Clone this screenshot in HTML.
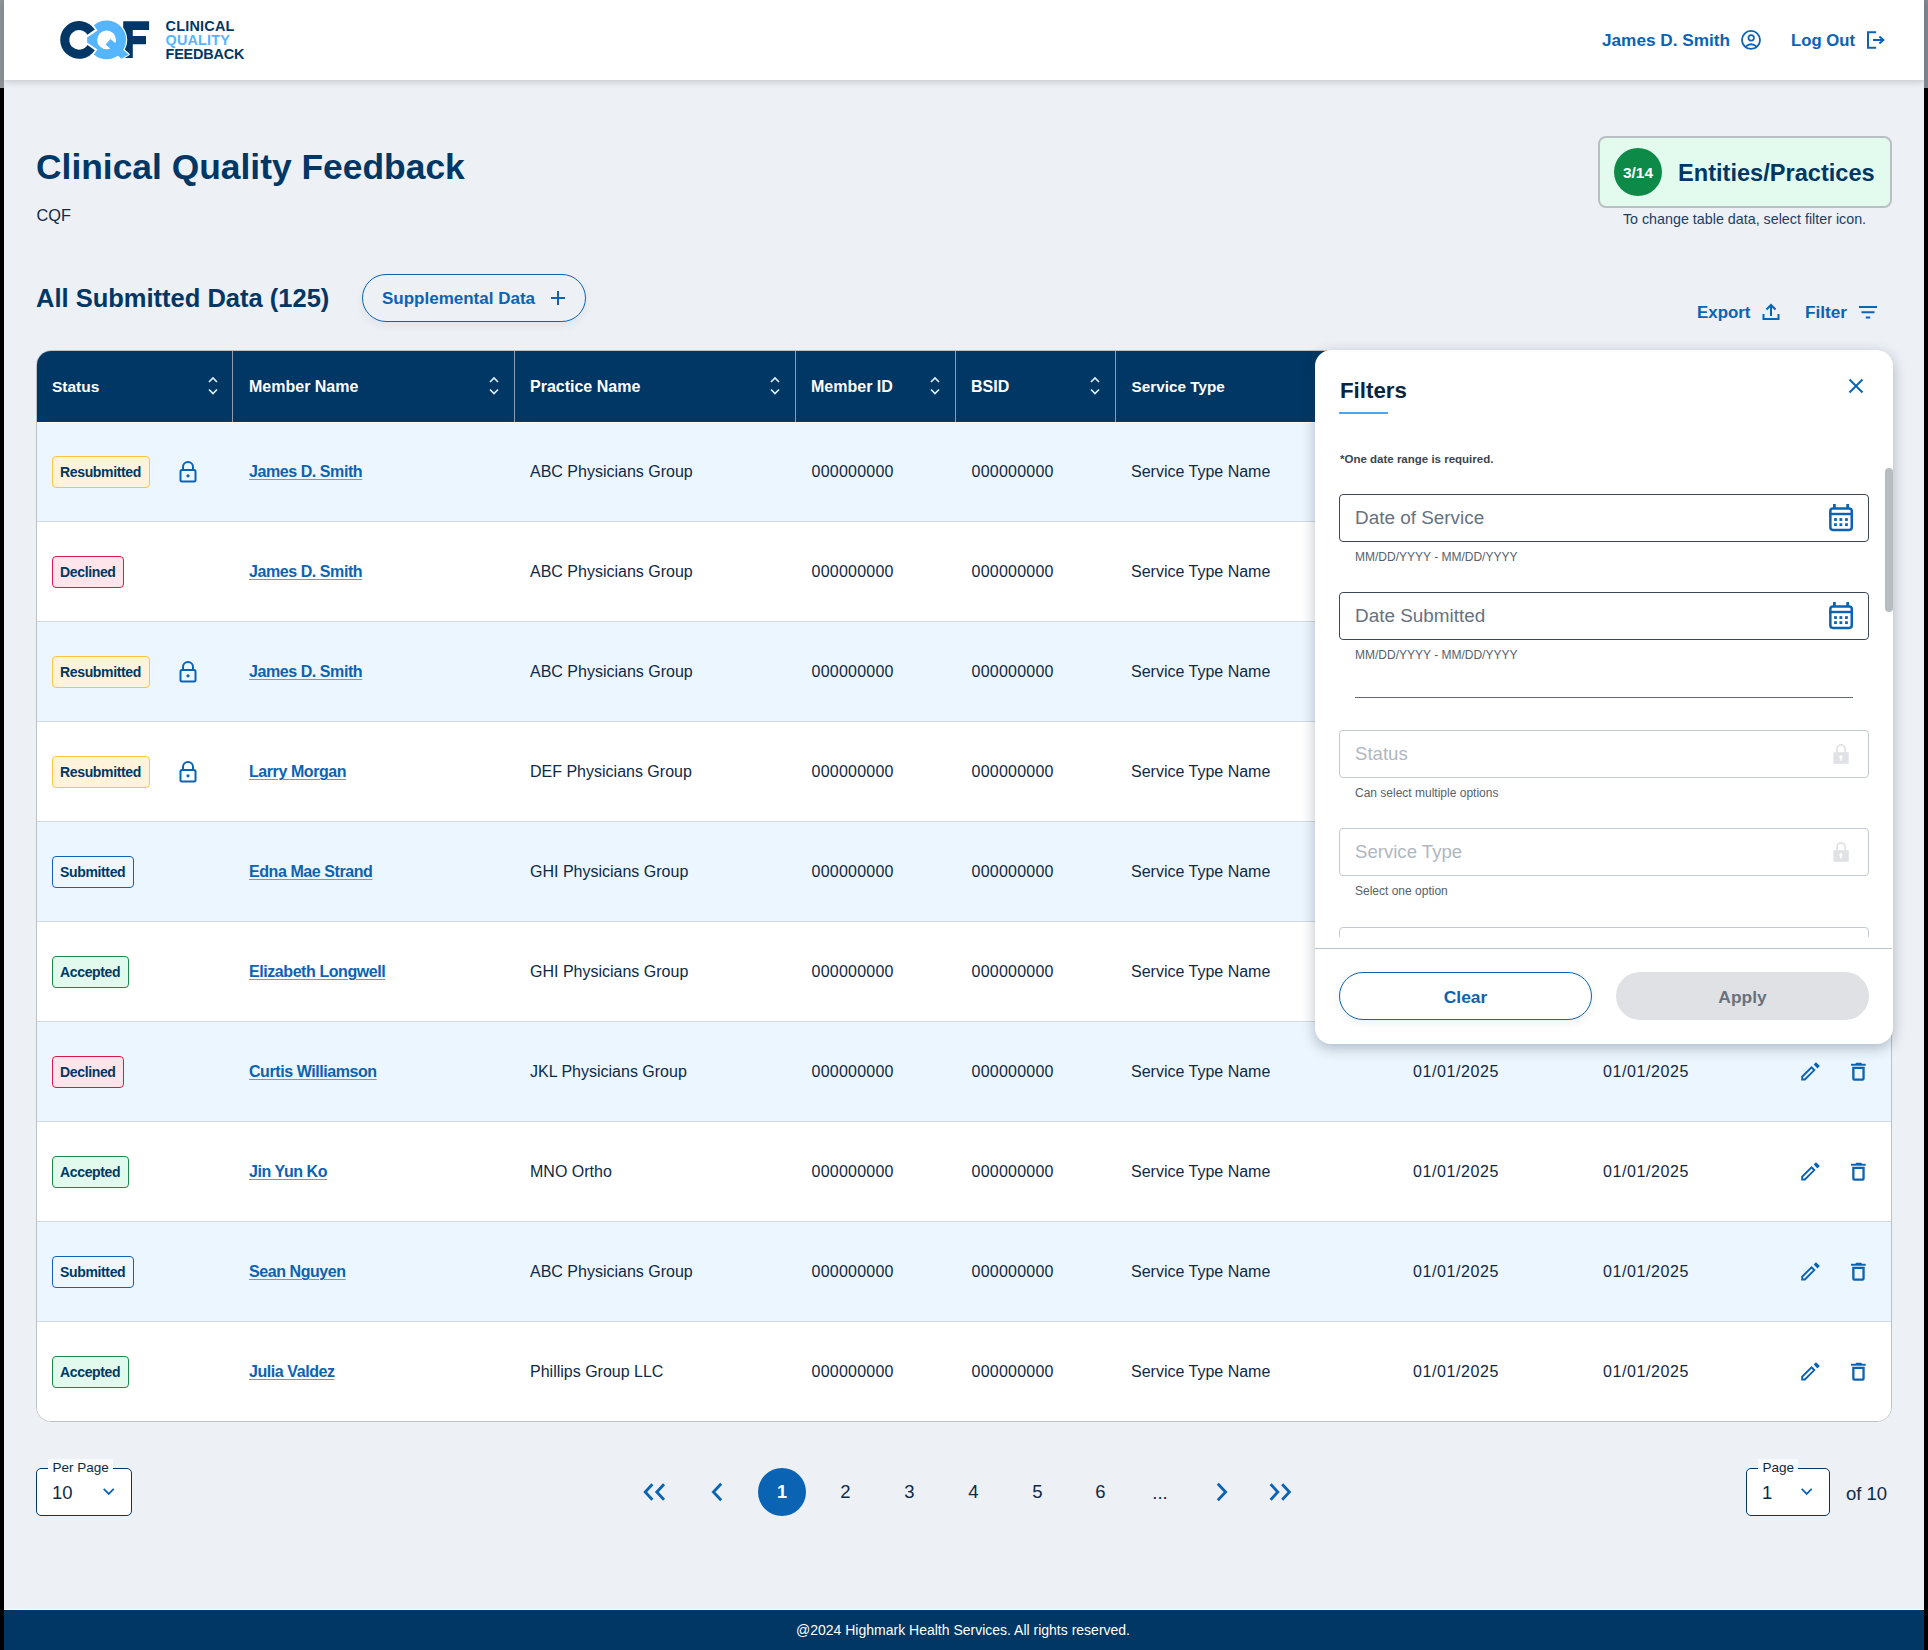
<!DOCTYPE html>
<html><head><meta charset="utf-8"><style>
*{box-sizing:border-box;margin:0;padding:0}
html,body{width:1928px;height:1650px;overflow:hidden}
body{background:#EDF0F5;font-family:"Liberation Sans",sans-serif;position:relative}
.t{position:absolute;white-space:nowrap}
.a{position:absolute}
svg{position:absolute;overflow:visible}
</style></head><body>
<div class="a" style="left:0;top:0;width:4px;height:88px;background:#8E9396"></div><div class="a" style="left:0;top:88px;width:4px;height:1562px;background:#000"></div><div class="a" style="left:1924px;top:0;width:4px;height:88px;background:#7E8790"></div><div class="a" style="left:1924px;top:88px;width:4px;height:1562px;background:#000"></div><div class="a" style="left:4px;top:0;width:1920px;height:80px;background:#fff;box-shadow:0 2px 6px rgba(50,62,75,.22)"></div><svg style="left:0;top:0" width="260" height="80" viewBox="0 0 260 80">
<path d="M94.85 29.45 A18.9 18.9 0 1 0 94.85 50.35 L87.45 45.0 A9.78 9.78 0 1 1 87.45 34.8 Z" fill="#003764"/>
<path d="M123.2 21.2 H149.1 V30 H132.8 V36 H146 V44.3 H132.8 V58 H123.2 Z" fill="#003764"/>
<g fill="#fff" stroke="#fff" stroke-width="2.2" stroke-linejoin="round">
<path d="M93.9 25.3 A19.4 19.4 0 1 1 93.9 54.4 L97.5 49.45 L87.1 42.5 L87.1 37.45 L97.5 30.4 Z"/>
<path d="M105.6 44.6 L110.5 38.9 L128.65 54.4 L121.4 58.8 Z"/>
</g>
<path d="M93.9 25.3 A19.4 19.4 0 1 1 93.9 54.4 L97.5 49.45 L87.1 42.5 L87.1 37.45 L97.5 30.4 Z" fill="#55B5FF"/>
<circle cx="106.6" cy="39.9" r="9.4" fill="#fff"/>
<path d="M105.6 44.6 L110.5 38.9 L128.65 54.4 L121.4 58.8 Z" fill="#55B5FF"/>
</svg><div class="t" style="left:165.5px;top:17.87px;font-size:14.4px;line-height:16.55px;color:#003764;font-weight:700;letter-spacing:0.25px">CLINICAL</div><div class="t" style="left:165.5px;top:31.87px;font-size:14.4px;line-height:16.55px;color:#55B5FF;font-weight:700;letter-spacing:0.2px">QUALITY</div><div class="t" style="left:165.5px;top:45.87px;font-size:14.4px;line-height:16.55px;color:#003764;font-weight:700;letter-spacing:-0.15px">FEEDBACK</div><div class="t" style="left:1602px;top:30.93px;font-size:17.2px;line-height:19.76px;color:#0B63B3;font-weight:700;">James D. Smith</div><svg style="left:1739px;top:28px" width="24" height="24" viewBox="0 0 24 24">
<circle cx="12" cy="11.9" r="9" fill="none" stroke="#0B63B3" stroke-width="1.8"/>
<circle cx="12.2" cy="9.8" r="2.75" fill="none" stroke="#0B63B3" stroke-width="1.7"/>
<path d="M6.3 18.8 Q12.1 13.6 17.9 18.8" fill="none" stroke="#0B63B3" stroke-width="1.8"/>
</svg><div class="t" style="left:1791px;top:31.39px;font-size:16.7px;line-height:19.19px;color:#0B63B3;font-weight:700;">Log Out</div><svg style="left:1864px;top:28px" width="24" height="24" viewBox="0 0 24 24">
<path d="M12.2 4.2 H4 V19.8 H12.2" fill="none" stroke="#0B63B3" stroke-width="2"/>
<path d="M9 12 H19.8 M15.4 8.4 L19.4 12 L15.4 15.6" fill="none" stroke="#0B63B3" stroke-width="2"/>
</svg><div class="t" style="left:36px;top:147.46px;font-size:35.4px;line-height:40.67px;color:#003764;font-weight:700;">Clinical Quality Feedback</div><div class="t" style="left:36.5px;top:206.45px;font-size:16.3px;line-height:18.73px;color:#0E2A47;font-weight:400;">CQF</div><div class="a" style="left:1598px;top:136px;width:294px;height:72px;border:2px solid #BABFC4;border-radius:8px;background:#E3FBEE"></div><div class="a" style="left:1614px;top:148px;width:48px;height:48px;border-radius:50%;background:#0E8A48"></div><div class="t" style="left:1338px;width:600px;text-align:center;top:164.26px;font-size:15.4px;line-height:17.69px;color:#fff;font-weight:700;">3/14</div><div class="t" style="left:1678px;top:159.64px;font-size:23.6px;line-height:27.12px;color:#003764;font-weight:700;">Entities/Practices</div><div class="t" style="left:1444.5px;width:600px;text-align:center;top:211.06px;font-size:14.3px;line-height:16.43px;color:#1B3E63;font-weight:400;">To change table data, select filter icon.</div><div class="t" style="left:36px;top:283.92px;font-size:25.5px;line-height:29.30px;color:#003764;font-weight:700;">All Submitted Data (125)</div><div class="a" style="left:362px;top:274px;width:224px;height:48px;border:1.6px solid #0B63B3;border-radius:24px;box-shadow:0 4px 10px rgba(40,60,90,.06)"></div><div class="t" style="left:382px;top:289.22px;font-size:17px;line-height:19.53px;color:#0B63B3;font-weight:700;">Supplemental Data</div><svg style="left:550px;top:290px" width="16" height="16" viewBox="0 0 16 16">
<path d="M8 1 V15 M1 8 H15" stroke="#0B63B3" stroke-width="2"/></svg><div class="t" style="left:1697px;top:302.71px;font-size:16.9px;line-height:19.42px;color:#0B63B3;font-weight:700;">Export</div><svg style="left:1762px;top:303px" width="18" height="18" viewBox="0 0 18 18">
<path d="M9 13 V2 M4.5 6.5 L9 2 L13.5 6.5 M1.5 11 V16 H16.5 V11" fill="none" stroke="#0B63B3" stroke-width="2"/></svg><div class="t" style="left:1805px;top:303.43px;font-size:17.2px;line-height:19.76px;color:#0B63B3;font-weight:700;">Filter</div><svg style="left:1858px;top:304px" width="20" height="16" viewBox="0 0 20 16">
<path d="M1 3 H19 M3.5 8.3 H16.5 M7.8 13.5 H12.2" stroke="#0B63B3" stroke-width="2"/></svg><div class="a" style="left:36px;top:350px;width:1856px;height:1072px;border:1px solid #BAC1C7;border-radius:15px;background:#fff;overflow:hidden"><div class="a" style="left:0px;top:0px;width:1854px;height:71px;background:#003764"></div><div class="a" style="left:0px;top:71px;width:1854px;height:1px;background:#fff"></div><div class="a" style="left:195px;top:0px;width:1px;height:71px;background:#8A9FB5"></div><div class="a" style="left:477px;top:0px;width:1px;height:71px;background:#8A9FB5"></div><div class="a" style="left:758px;top:0px;width:1px;height:71px;background:#8A9FB5"></div><div class="a" style="left:918px;top:0px;width:1px;height:71px;background:#8A9FB5"></div><div class="a" style="left:1078px;top:0px;width:1px;height:71px;background:#8A9FB5"></div><div class="a" style="left:0px;top:72px;width:1854px;height:99px;background:#ECF6FE"></div><div class="a" style="left:0px;top:170px;width:1854px;height:1px;background:#D3D9E0"></div><div class="a" style="left:0px;top:171px;width:1854px;height:99px;background:#FFFFFF"></div><div class="a" style="left:0px;top:270px;width:1854px;height:1px;background:#D3D9E0"></div><div class="a" style="left:0px;top:271px;width:1854px;height:99px;background:#ECF6FE"></div><div class="a" style="left:0px;top:370px;width:1854px;height:1px;background:#D3D9E0"></div><div class="a" style="left:0px;top:371px;width:1854px;height:99px;background:#FFFFFF"></div><div class="a" style="left:0px;top:470px;width:1854px;height:1px;background:#D3D9E0"></div><div class="a" style="left:0px;top:471px;width:1854px;height:99px;background:#ECF6FE"></div><div class="a" style="left:0px;top:570px;width:1854px;height:1px;background:#D3D9E0"></div><div class="a" style="left:0px;top:571px;width:1854px;height:99px;background:#FFFFFF"></div><div class="a" style="left:0px;top:670px;width:1854px;height:1px;background:#D3D9E0"></div><div class="a" style="left:0px;top:671px;width:1854px;height:99px;background:#ECF6FE"></div><div class="a" style="left:0px;top:770px;width:1854px;height:1px;background:#D3D9E0"></div><div class="a" style="left:0px;top:771px;width:1854px;height:99px;background:#FFFFFF"></div><div class="a" style="left:0px;top:870px;width:1854px;height:1px;background:#D3D9E0"></div><div class="a" style="left:0px;top:871px;width:1854px;height:99px;background:#ECF6FE"></div><div class="a" style="left:0px;top:970px;width:1854px;height:1px;background:#D3D9E0"></div><div class="a" style="left:0px;top:971px;width:1854px;height:99px;background:#FFFFFF"></div></div><div class="t" style="left:52px;top:377.97px;font-size:15.5px;line-height:17.81px;color:#fff;font-weight:700;">Status</div><div class="t" style="left:249px;top:377.52px;font-size:16px;line-height:18.38px;color:#fff;font-weight:700;">Member Name</div><div class="t" style="left:530px;top:377.52px;font-size:16px;line-height:18.38px;color:#fff;font-weight:700;">Practice Name</div><div class="t" style="left:811px;top:377.52px;font-size:16px;line-height:18.38px;color:#fff;font-weight:700;">Member ID</div><div class="t" style="left:971px;top:377.52px;font-size:16px;line-height:18.38px;color:#fff;font-weight:700;">BSID</div><div class="t" style="left:1131.5px;top:378.15px;font-size:15.3px;line-height:17.58px;color:#fff;font-weight:700;">Service Type</div><svg style="left:207px;top:376px" width="12" height="20" viewBox="0 0 12 20">
<path d="M2 6 L6 2 L10 6 M2 13.5 L6 17.5 L10 13.5" fill="none" stroke="#DCEEFF" stroke-width="1.7"/></svg><svg style="left:488px;top:376px" width="12" height="20" viewBox="0 0 12 20">
<path d="M2 6 L6 2 L10 6 M2 13.5 L6 17.5 L10 13.5" fill="none" stroke="#DCEEFF" stroke-width="1.7"/></svg><svg style="left:769px;top:376px" width="12" height="20" viewBox="0 0 12 20">
<path d="M2 6 L6 2 L10 6 M2 13.5 L6 17.5 L10 13.5" fill="none" stroke="#DCEEFF" stroke-width="1.7"/></svg><svg style="left:929px;top:376px" width="12" height="20" viewBox="0 0 12 20">
<path d="M2 6 L6 2 L10 6 M2 13.5 L6 17.5 L10 13.5" fill="none" stroke="#DCEEFF" stroke-width="1.7"/></svg><svg style="left:1089px;top:376px" width="12" height="20" viewBox="0 0 12 20">
<path d="M2 6 L6 2 L10 6 M2 13.5 L6 17.5 L10 13.5" fill="none" stroke="#DCEEFF" stroke-width="1.7"/></svg><div class="a" style="left:52px;top:456.0px;width:98px;height:32px;background:#FFF3DB;border:1.6px solid #FFC53D;border-radius:4px"></div><div class="t" style="left:60px;top:463.73px;font-size:14px;line-height:16.09px;color:#003764;font-weight:700;letter-spacing:-0.35px">Resubmitted</div><svg style="left:178px;top:459.5px" width="20" height="24" viewBox="0 0 20 24">
<path d="M5 10 V7 A5 5 0 0 1 15 7 V10" fill="none" stroke="#0B63B3" stroke-width="2"/>
<rect x="2.5" y="10" width="15" height="11.5" rx="1.5" fill="none" stroke="#0B63B3" stroke-width="2"/>
<circle cx="10" cy="15.8" r="1.6" fill="#0B63B3"/></svg><div class="t" style="left:249px;top:463.22px;font-size:16px;line-height:18.38px;color:#0B63B3;font-weight:700;letter-spacing:-0.43px;text-decoration:underline;text-decoration-color:#5E9DD6;text-decoration-thickness:1.3px;text-underline-offset:1.6px">James D. Smith</div><div class="t" style="left:530px;top:462.52px;font-size:16px;line-height:18.38px;color:#0E2A47;font-weight:400;">ABC Physicians Group</div><div class="t" style="left:811.5px;top:462.52px;font-size:16px;line-height:18.38px;color:#0E2A47;font-weight:400;letter-spacing:0.23px">000000000</div><div class="t" style="left:971.5px;top:462.52px;font-size:16px;line-height:18.38px;color:#0E2A47;font-weight:400;letter-spacing:0.23px">000000000</div><div class="t" style="left:1131px;top:462.52px;font-size:16px;line-height:18.38px;color:#0E2A47;font-weight:400;">Service Type Name</div><div class="t" style="left:1413px;top:462.52px;font-size:16px;line-height:18.38px;color:#0E2A47;font-weight:400;letter-spacing:0.6px">01/01/2025</div><div class="t" style="left:1603px;top:462.52px;font-size:16px;line-height:18.38px;color:#0E2A47;font-weight:400;letter-spacing:0.6px">01/01/2025</div><svg style="left:1799px;top:460px" width="24" height="24" viewBox="0 0 24 24"><g transform="translate(0,0)">
<path d="M3.15 16.75 V19.45 H5.9 L15.3 10.05 L12.55 7.3 Z" fill="none" stroke="#0B63B3" stroke-width="1.9" stroke-linejoin="miter"/>
<path d="M16.95 2.35 L20.9 5.95 L18.4 8.45 L14.7 4.6 Z" fill="#0B63B3"/></g></svg><svg style="left:1847px;top:460px" width="24" height="24" viewBox="0 0 24 24"><g transform="translate(0,0.2)">
<rect x="4" y="3.6" width="14.7" height="1.9" fill="#0B63B3"/><rect x="8.6" y="2.6" width="6.2" height="1.6" rx="0.8" fill="#0B63B3"/>
<path d="M6.35 6.5 V18.3 Q6.35 19.45 7.5 19.45 H15.4 Q16.55 19.45 16.55 18.3 V6.5 M5.2 7.65 H17.7" fill="none" stroke="#0B63B3" stroke-width="2.3"/></g></svg><div class="a" style="left:52px;top:556.0px;width:72px;height:32px;background:#FDE5EB;border:1.6px solid #D7194A;border-radius:4px"></div><div class="t" style="left:60px;top:563.73px;font-size:14px;line-height:16.09px;color:#003764;font-weight:700;letter-spacing:-0.35px">Declined</div><div class="t" style="left:249px;top:563.22px;font-size:16px;line-height:18.38px;color:#0B63B3;font-weight:700;letter-spacing:-0.43px;text-decoration:underline;text-decoration-color:#5E9DD6;text-decoration-thickness:1.3px;text-underline-offset:1.6px">James D. Smith</div><div class="t" style="left:530px;top:562.52px;font-size:16px;line-height:18.38px;color:#0E2A47;font-weight:400;">ABC Physicians Group</div><div class="t" style="left:811.5px;top:562.52px;font-size:16px;line-height:18.38px;color:#0E2A47;font-weight:400;letter-spacing:0.23px">000000000</div><div class="t" style="left:971.5px;top:562.52px;font-size:16px;line-height:18.38px;color:#0E2A47;font-weight:400;letter-spacing:0.23px">000000000</div><div class="t" style="left:1131px;top:562.52px;font-size:16px;line-height:18.38px;color:#0E2A47;font-weight:400;">Service Type Name</div><div class="t" style="left:1413px;top:562.52px;font-size:16px;line-height:18.38px;color:#0E2A47;font-weight:400;letter-spacing:0.6px">01/01/2025</div><div class="t" style="left:1603px;top:562.52px;font-size:16px;line-height:18.38px;color:#0E2A47;font-weight:400;letter-spacing:0.6px">01/01/2025</div><svg style="left:1799px;top:560px" width="24" height="24" viewBox="0 0 24 24"><g transform="translate(0,0)">
<path d="M3.15 16.75 V19.45 H5.9 L15.3 10.05 L12.55 7.3 Z" fill="none" stroke="#0B63B3" stroke-width="1.9" stroke-linejoin="miter"/>
<path d="M16.95 2.35 L20.9 5.95 L18.4 8.45 L14.7 4.6 Z" fill="#0B63B3"/></g></svg><svg style="left:1847px;top:560px" width="24" height="24" viewBox="0 0 24 24"><g transform="translate(0,0.2)">
<rect x="4" y="3.6" width="14.7" height="1.9" fill="#0B63B3"/><rect x="8.6" y="2.6" width="6.2" height="1.6" rx="0.8" fill="#0B63B3"/>
<path d="M6.35 6.5 V18.3 Q6.35 19.45 7.5 19.45 H15.4 Q16.55 19.45 16.55 18.3 V6.5 M5.2 7.65 H17.7" fill="none" stroke="#0B63B3" stroke-width="2.3"/></g></svg><div class="a" style="left:52px;top:656.0px;width:98px;height:32px;background:#FFF3DB;border:1.6px solid #FFC53D;border-radius:4px"></div><div class="t" style="left:60px;top:663.73px;font-size:14px;line-height:16.09px;color:#003764;font-weight:700;letter-spacing:-0.35px">Resubmitted</div><svg style="left:178px;top:659.5px" width="20" height="24" viewBox="0 0 20 24">
<path d="M5 10 V7 A5 5 0 0 1 15 7 V10" fill="none" stroke="#0B63B3" stroke-width="2"/>
<rect x="2.5" y="10" width="15" height="11.5" rx="1.5" fill="none" stroke="#0B63B3" stroke-width="2"/>
<circle cx="10" cy="15.8" r="1.6" fill="#0B63B3"/></svg><div class="t" style="left:249px;top:663.22px;font-size:16px;line-height:18.38px;color:#0B63B3;font-weight:700;letter-spacing:-0.43px;text-decoration:underline;text-decoration-color:#5E9DD6;text-decoration-thickness:1.3px;text-underline-offset:1.6px">James D. Smith</div><div class="t" style="left:530px;top:662.52px;font-size:16px;line-height:18.38px;color:#0E2A47;font-weight:400;">ABC Physicians Group</div><div class="t" style="left:811.5px;top:662.52px;font-size:16px;line-height:18.38px;color:#0E2A47;font-weight:400;letter-spacing:0.23px">000000000</div><div class="t" style="left:971.5px;top:662.52px;font-size:16px;line-height:18.38px;color:#0E2A47;font-weight:400;letter-spacing:0.23px">000000000</div><div class="t" style="left:1131px;top:662.52px;font-size:16px;line-height:18.38px;color:#0E2A47;font-weight:400;">Service Type Name</div><div class="t" style="left:1413px;top:662.52px;font-size:16px;line-height:18.38px;color:#0E2A47;font-weight:400;letter-spacing:0.6px">01/01/2025</div><div class="t" style="left:1603px;top:662.52px;font-size:16px;line-height:18.38px;color:#0E2A47;font-weight:400;letter-spacing:0.6px">01/01/2025</div><svg style="left:1799px;top:660px" width="24" height="24" viewBox="0 0 24 24"><g transform="translate(0,0)">
<path d="M3.15 16.75 V19.45 H5.9 L15.3 10.05 L12.55 7.3 Z" fill="none" stroke="#0B63B3" stroke-width="1.9" stroke-linejoin="miter"/>
<path d="M16.95 2.35 L20.9 5.95 L18.4 8.45 L14.7 4.6 Z" fill="#0B63B3"/></g></svg><svg style="left:1847px;top:660px" width="24" height="24" viewBox="0 0 24 24"><g transform="translate(0,0.2)">
<rect x="4" y="3.6" width="14.7" height="1.9" fill="#0B63B3"/><rect x="8.6" y="2.6" width="6.2" height="1.6" rx="0.8" fill="#0B63B3"/>
<path d="M6.35 6.5 V18.3 Q6.35 19.45 7.5 19.45 H15.4 Q16.55 19.45 16.55 18.3 V6.5 M5.2 7.65 H17.7" fill="none" stroke="#0B63B3" stroke-width="2.3"/></g></svg><div class="a" style="left:52px;top:756.0px;width:98px;height:32px;background:#FFF3DB;border:1.6px solid #FFC53D;border-radius:4px"></div><div class="t" style="left:60px;top:763.73px;font-size:14px;line-height:16.09px;color:#003764;font-weight:700;letter-spacing:-0.35px">Resubmitted</div><svg style="left:178px;top:759.5px" width="20" height="24" viewBox="0 0 20 24">
<path d="M5 10 V7 A5 5 0 0 1 15 7 V10" fill="none" stroke="#0B63B3" stroke-width="2"/>
<rect x="2.5" y="10" width="15" height="11.5" rx="1.5" fill="none" stroke="#0B63B3" stroke-width="2"/>
<circle cx="10" cy="15.8" r="1.6" fill="#0B63B3"/></svg><div class="t" style="left:249px;top:763.22px;font-size:16px;line-height:18.38px;color:#0B63B3;font-weight:700;letter-spacing:-0.43px;text-decoration:underline;text-decoration-color:#5E9DD6;text-decoration-thickness:1.3px;text-underline-offset:1.6px">Larry Morgan</div><div class="t" style="left:530px;top:762.52px;font-size:16px;line-height:18.38px;color:#0E2A47;font-weight:400;">DEF Physicians Group</div><div class="t" style="left:811.5px;top:762.52px;font-size:16px;line-height:18.38px;color:#0E2A47;font-weight:400;letter-spacing:0.23px">000000000</div><div class="t" style="left:971.5px;top:762.52px;font-size:16px;line-height:18.38px;color:#0E2A47;font-weight:400;letter-spacing:0.23px">000000000</div><div class="t" style="left:1131px;top:762.52px;font-size:16px;line-height:18.38px;color:#0E2A47;font-weight:400;">Service Type Name</div><div class="t" style="left:1413px;top:762.52px;font-size:16px;line-height:18.38px;color:#0E2A47;font-weight:400;letter-spacing:0.6px">01/01/2025</div><div class="t" style="left:1603px;top:762.52px;font-size:16px;line-height:18.38px;color:#0E2A47;font-weight:400;letter-spacing:0.6px">01/01/2025</div><svg style="left:1799px;top:760px" width="24" height="24" viewBox="0 0 24 24"><g transform="translate(0,0)">
<path d="M3.15 16.75 V19.45 H5.9 L15.3 10.05 L12.55 7.3 Z" fill="none" stroke="#0B63B3" stroke-width="1.9" stroke-linejoin="miter"/>
<path d="M16.95 2.35 L20.9 5.95 L18.4 8.45 L14.7 4.6 Z" fill="#0B63B3"/></g></svg><svg style="left:1847px;top:760px" width="24" height="24" viewBox="0 0 24 24"><g transform="translate(0,0.2)">
<rect x="4" y="3.6" width="14.7" height="1.9" fill="#0B63B3"/><rect x="8.6" y="2.6" width="6.2" height="1.6" rx="0.8" fill="#0B63B3"/>
<path d="M6.35 6.5 V18.3 Q6.35 19.45 7.5 19.45 H15.4 Q16.55 19.45 16.55 18.3 V6.5 M5.2 7.65 H17.7" fill="none" stroke="#0B63B3" stroke-width="2.3"/></g></svg><div class="a" style="left:52px;top:856.0px;width:82px;height:32px;background:#EEF7FF;border:1.6px solid #1262B3;border-radius:4px"></div><div class="t" style="left:60px;top:863.73px;font-size:14px;line-height:16.09px;color:#003764;font-weight:700;letter-spacing:-0.35px">Submitted</div><div class="t" style="left:249px;top:863.22px;font-size:16px;line-height:18.38px;color:#0B63B3;font-weight:700;letter-spacing:-0.43px;text-decoration:underline;text-decoration-color:#5E9DD6;text-decoration-thickness:1.3px;text-underline-offset:1.6px">Edna Mae Strand</div><div class="t" style="left:530px;top:862.52px;font-size:16px;line-height:18.38px;color:#0E2A47;font-weight:400;">GHI Physicians Group</div><div class="t" style="left:811.5px;top:862.52px;font-size:16px;line-height:18.38px;color:#0E2A47;font-weight:400;letter-spacing:0.23px">000000000</div><div class="t" style="left:971.5px;top:862.52px;font-size:16px;line-height:18.38px;color:#0E2A47;font-weight:400;letter-spacing:0.23px">000000000</div><div class="t" style="left:1131px;top:862.52px;font-size:16px;line-height:18.38px;color:#0E2A47;font-weight:400;">Service Type Name</div><div class="t" style="left:1413px;top:862.52px;font-size:16px;line-height:18.38px;color:#0E2A47;font-weight:400;letter-spacing:0.6px">01/01/2025</div><div class="t" style="left:1603px;top:862.52px;font-size:16px;line-height:18.38px;color:#0E2A47;font-weight:400;letter-spacing:0.6px">01/01/2025</div><svg style="left:1799px;top:860px" width="24" height="24" viewBox="0 0 24 24"><g transform="translate(0,0)">
<path d="M3.15 16.75 V19.45 H5.9 L15.3 10.05 L12.55 7.3 Z" fill="none" stroke="#0B63B3" stroke-width="1.9" stroke-linejoin="miter"/>
<path d="M16.95 2.35 L20.9 5.95 L18.4 8.45 L14.7 4.6 Z" fill="#0B63B3"/></g></svg><svg style="left:1847px;top:860px" width="24" height="24" viewBox="0 0 24 24"><g transform="translate(0,0.2)">
<rect x="4" y="3.6" width="14.7" height="1.9" fill="#0B63B3"/><rect x="8.6" y="2.6" width="6.2" height="1.6" rx="0.8" fill="#0B63B3"/>
<path d="M6.35 6.5 V18.3 Q6.35 19.45 7.5 19.45 H15.4 Q16.55 19.45 16.55 18.3 V6.5 M5.2 7.65 H17.7" fill="none" stroke="#0B63B3" stroke-width="2.3"/></g></svg><div class="a" style="left:52px;top:956.0px;width:77px;height:32px;background:#E2FAED;border:1.6px solid #178A47;border-radius:4px"></div><div class="t" style="left:60px;top:963.73px;font-size:14px;line-height:16.09px;color:#003764;font-weight:700;letter-spacing:-0.35px">Accepted</div><div class="t" style="left:249px;top:963.22px;font-size:16px;line-height:18.38px;color:#0B63B3;font-weight:700;letter-spacing:-0.43px;text-decoration:underline;text-decoration-color:#5E9DD6;text-decoration-thickness:1.3px;text-underline-offset:1.6px">Elizabeth Longwell</div><div class="t" style="left:530px;top:962.52px;font-size:16px;line-height:18.38px;color:#0E2A47;font-weight:400;">GHI Physicians Group</div><div class="t" style="left:811.5px;top:962.52px;font-size:16px;line-height:18.38px;color:#0E2A47;font-weight:400;letter-spacing:0.23px">000000000</div><div class="t" style="left:971.5px;top:962.52px;font-size:16px;line-height:18.38px;color:#0E2A47;font-weight:400;letter-spacing:0.23px">000000000</div><div class="t" style="left:1131px;top:962.52px;font-size:16px;line-height:18.38px;color:#0E2A47;font-weight:400;">Service Type Name</div><div class="t" style="left:1413px;top:962.52px;font-size:16px;line-height:18.38px;color:#0E2A47;font-weight:400;letter-spacing:0.6px">01/01/2025</div><div class="t" style="left:1603px;top:962.52px;font-size:16px;line-height:18.38px;color:#0E2A47;font-weight:400;letter-spacing:0.6px">01/01/2025</div><svg style="left:1799px;top:960px" width="24" height="24" viewBox="0 0 24 24"><g transform="translate(0,0)">
<path d="M3.15 16.75 V19.45 H5.9 L15.3 10.05 L12.55 7.3 Z" fill="none" stroke="#0B63B3" stroke-width="1.9" stroke-linejoin="miter"/>
<path d="M16.95 2.35 L20.9 5.95 L18.4 8.45 L14.7 4.6 Z" fill="#0B63B3"/></g></svg><svg style="left:1847px;top:960px" width="24" height="24" viewBox="0 0 24 24"><g transform="translate(0,0.2)">
<rect x="4" y="3.6" width="14.7" height="1.9" fill="#0B63B3"/><rect x="8.6" y="2.6" width="6.2" height="1.6" rx="0.8" fill="#0B63B3"/>
<path d="M6.35 6.5 V18.3 Q6.35 19.45 7.5 19.45 H15.4 Q16.55 19.45 16.55 18.3 V6.5 M5.2 7.65 H17.7" fill="none" stroke="#0B63B3" stroke-width="2.3"/></g></svg><div class="a" style="left:52px;top:1056.0px;width:72px;height:32px;background:#FDE5EB;border:1.6px solid #D7194A;border-radius:4px"></div><div class="t" style="left:60px;top:1063.73px;font-size:14px;line-height:16.09px;color:#003764;font-weight:700;letter-spacing:-0.35px">Declined</div><div class="t" style="left:249px;top:1063.22px;font-size:16px;line-height:18.38px;color:#0B63B3;font-weight:700;letter-spacing:-0.43px;text-decoration:underline;text-decoration-color:#5E9DD6;text-decoration-thickness:1.3px;text-underline-offset:1.6px">Curtis Williamson</div><div class="t" style="left:530px;top:1062.52px;font-size:16px;line-height:18.38px;color:#0E2A47;font-weight:400;">JKL Physicians Group</div><div class="t" style="left:811.5px;top:1062.52px;font-size:16px;line-height:18.38px;color:#0E2A47;font-weight:400;letter-spacing:0.23px">000000000</div><div class="t" style="left:971.5px;top:1062.52px;font-size:16px;line-height:18.38px;color:#0E2A47;font-weight:400;letter-spacing:0.23px">000000000</div><div class="t" style="left:1131px;top:1062.52px;font-size:16px;line-height:18.38px;color:#0E2A47;font-weight:400;">Service Type Name</div><div class="t" style="left:1413px;top:1062.52px;font-size:16px;line-height:18.38px;color:#0E2A47;font-weight:400;letter-spacing:0.6px">01/01/2025</div><div class="t" style="left:1603px;top:1062.52px;font-size:16px;line-height:18.38px;color:#0E2A47;font-weight:400;letter-spacing:0.6px">01/01/2025</div><svg style="left:1799px;top:1060px" width="24" height="24" viewBox="0 0 24 24"><g transform="translate(0,0)">
<path d="M3.15 16.75 V19.45 H5.9 L15.3 10.05 L12.55 7.3 Z" fill="none" stroke="#0B63B3" stroke-width="1.9" stroke-linejoin="miter"/>
<path d="M16.95 2.35 L20.9 5.95 L18.4 8.45 L14.7 4.6 Z" fill="#0B63B3"/></g></svg><svg style="left:1847px;top:1060px" width="24" height="24" viewBox="0 0 24 24"><g transform="translate(0,0.2)">
<rect x="4" y="3.6" width="14.7" height="1.9" fill="#0B63B3"/><rect x="8.6" y="2.6" width="6.2" height="1.6" rx="0.8" fill="#0B63B3"/>
<path d="M6.35 6.5 V18.3 Q6.35 19.45 7.5 19.45 H15.4 Q16.55 19.45 16.55 18.3 V6.5 M5.2 7.65 H17.7" fill="none" stroke="#0B63B3" stroke-width="2.3"/></g></svg><div class="a" style="left:52px;top:1156.0px;width:77px;height:32px;background:#E2FAED;border:1.6px solid #178A47;border-radius:4px"></div><div class="t" style="left:60px;top:1163.73px;font-size:14px;line-height:16.09px;color:#003764;font-weight:700;letter-spacing:-0.35px">Accepted</div><div class="t" style="left:249px;top:1163.22px;font-size:16px;line-height:18.38px;color:#0B63B3;font-weight:700;letter-spacing:-0.43px;text-decoration:underline;text-decoration-color:#5E9DD6;text-decoration-thickness:1.3px;text-underline-offset:1.6px">Jin Yun Ko</div><div class="t" style="left:530px;top:1162.52px;font-size:16px;line-height:18.38px;color:#0E2A47;font-weight:400;">MNO Ortho</div><div class="t" style="left:811.5px;top:1162.52px;font-size:16px;line-height:18.38px;color:#0E2A47;font-weight:400;letter-spacing:0.23px">000000000</div><div class="t" style="left:971.5px;top:1162.52px;font-size:16px;line-height:18.38px;color:#0E2A47;font-weight:400;letter-spacing:0.23px">000000000</div><div class="t" style="left:1131px;top:1162.52px;font-size:16px;line-height:18.38px;color:#0E2A47;font-weight:400;">Service Type Name</div><div class="t" style="left:1413px;top:1162.52px;font-size:16px;line-height:18.38px;color:#0E2A47;font-weight:400;letter-spacing:0.6px">01/01/2025</div><div class="t" style="left:1603px;top:1162.52px;font-size:16px;line-height:18.38px;color:#0E2A47;font-weight:400;letter-spacing:0.6px">01/01/2025</div><svg style="left:1799px;top:1160px" width="24" height="24" viewBox="0 0 24 24"><g transform="translate(0,0)">
<path d="M3.15 16.75 V19.45 H5.9 L15.3 10.05 L12.55 7.3 Z" fill="none" stroke="#0B63B3" stroke-width="1.9" stroke-linejoin="miter"/>
<path d="M16.95 2.35 L20.9 5.95 L18.4 8.45 L14.7 4.6 Z" fill="#0B63B3"/></g></svg><svg style="left:1847px;top:1160px" width="24" height="24" viewBox="0 0 24 24"><g transform="translate(0,0.2)">
<rect x="4" y="3.6" width="14.7" height="1.9" fill="#0B63B3"/><rect x="8.6" y="2.6" width="6.2" height="1.6" rx="0.8" fill="#0B63B3"/>
<path d="M6.35 6.5 V18.3 Q6.35 19.45 7.5 19.45 H15.4 Q16.55 19.45 16.55 18.3 V6.5 M5.2 7.65 H17.7" fill="none" stroke="#0B63B3" stroke-width="2.3"/></g></svg><div class="a" style="left:52px;top:1256.0px;width:82px;height:32px;background:#EEF7FF;border:1.6px solid #1262B3;border-radius:4px"></div><div class="t" style="left:60px;top:1263.73px;font-size:14px;line-height:16.09px;color:#003764;font-weight:700;letter-spacing:-0.35px">Submitted</div><div class="t" style="left:249px;top:1263.22px;font-size:16px;line-height:18.38px;color:#0B63B3;font-weight:700;letter-spacing:-0.43px;text-decoration:underline;text-decoration-color:#5E9DD6;text-decoration-thickness:1.3px;text-underline-offset:1.6px">Sean Nguyen</div><div class="t" style="left:530px;top:1262.52px;font-size:16px;line-height:18.38px;color:#0E2A47;font-weight:400;">ABC Physicians Group</div><div class="t" style="left:811.5px;top:1262.52px;font-size:16px;line-height:18.38px;color:#0E2A47;font-weight:400;letter-spacing:0.23px">000000000</div><div class="t" style="left:971.5px;top:1262.52px;font-size:16px;line-height:18.38px;color:#0E2A47;font-weight:400;letter-spacing:0.23px">000000000</div><div class="t" style="left:1131px;top:1262.52px;font-size:16px;line-height:18.38px;color:#0E2A47;font-weight:400;">Service Type Name</div><div class="t" style="left:1413px;top:1262.52px;font-size:16px;line-height:18.38px;color:#0E2A47;font-weight:400;letter-spacing:0.6px">01/01/2025</div><div class="t" style="left:1603px;top:1262.52px;font-size:16px;line-height:18.38px;color:#0E2A47;font-weight:400;letter-spacing:0.6px">01/01/2025</div><svg style="left:1799px;top:1260px" width="24" height="24" viewBox="0 0 24 24"><g transform="translate(0,0)">
<path d="M3.15 16.75 V19.45 H5.9 L15.3 10.05 L12.55 7.3 Z" fill="none" stroke="#0B63B3" stroke-width="1.9" stroke-linejoin="miter"/>
<path d="M16.95 2.35 L20.9 5.95 L18.4 8.45 L14.7 4.6 Z" fill="#0B63B3"/></g></svg><svg style="left:1847px;top:1260px" width="24" height="24" viewBox="0 0 24 24"><g transform="translate(0,0.2)">
<rect x="4" y="3.6" width="14.7" height="1.9" fill="#0B63B3"/><rect x="8.6" y="2.6" width="6.2" height="1.6" rx="0.8" fill="#0B63B3"/>
<path d="M6.35 6.5 V18.3 Q6.35 19.45 7.5 19.45 H15.4 Q16.55 19.45 16.55 18.3 V6.5 M5.2 7.65 H17.7" fill="none" stroke="#0B63B3" stroke-width="2.3"/></g></svg><div class="a" style="left:52px;top:1356.0px;width:77px;height:32px;background:#E2FAED;border:1.6px solid #178A47;border-radius:4px"></div><div class="t" style="left:60px;top:1363.73px;font-size:14px;line-height:16.09px;color:#003764;font-weight:700;letter-spacing:-0.35px">Accepted</div><div class="t" style="left:249px;top:1363.22px;font-size:16px;line-height:18.38px;color:#0B63B3;font-weight:700;letter-spacing:-0.43px;text-decoration:underline;text-decoration-color:#5E9DD6;text-decoration-thickness:1.3px;text-underline-offset:1.6px">Julia Valdez</div><div class="t" style="left:530px;top:1362.52px;font-size:16px;line-height:18.38px;color:#0E2A47;font-weight:400;">Phillips Group LLC</div><div class="t" style="left:811.5px;top:1362.52px;font-size:16px;line-height:18.38px;color:#0E2A47;font-weight:400;letter-spacing:0.23px">000000000</div><div class="t" style="left:971.5px;top:1362.52px;font-size:16px;line-height:18.38px;color:#0E2A47;font-weight:400;letter-spacing:0.23px">000000000</div><div class="t" style="left:1131px;top:1362.52px;font-size:16px;line-height:18.38px;color:#0E2A47;font-weight:400;">Service Type Name</div><div class="t" style="left:1413px;top:1362.52px;font-size:16px;line-height:18.38px;color:#0E2A47;font-weight:400;letter-spacing:0.6px">01/01/2025</div><div class="t" style="left:1603px;top:1362.52px;font-size:16px;line-height:18.38px;color:#0E2A47;font-weight:400;letter-spacing:0.6px">01/01/2025</div><svg style="left:1799px;top:1360px" width="24" height="24" viewBox="0 0 24 24"><g transform="translate(0,0)">
<path d="M3.15 16.75 V19.45 H5.9 L15.3 10.05 L12.55 7.3 Z" fill="none" stroke="#0B63B3" stroke-width="1.9" stroke-linejoin="miter"/>
<path d="M16.95 2.35 L20.9 5.95 L18.4 8.45 L14.7 4.6 Z" fill="#0B63B3"/></g></svg><svg style="left:1847px;top:1360px" width="24" height="24" viewBox="0 0 24 24"><g transform="translate(0,0.2)">
<rect x="4" y="3.6" width="14.7" height="1.9" fill="#0B63B3"/><rect x="8.6" y="2.6" width="6.2" height="1.6" rx="0.8" fill="#0B63B3"/>
<path d="M6.35 6.5 V18.3 Q6.35 19.45 7.5 19.45 H15.4 Q16.55 19.45 16.55 18.3 V6.5 M5.2 7.65 H17.7" fill="none" stroke="#0B63B3" stroke-width="2.3"/></g></svg><div class="a" style="left:1315px;top:350px;width:578px;height:694px;background:#fff;border-radius:16px;box-shadow:0 4px 14px rgba(25,40,60,.3)"></div><div class="t" style="left:1340px;top:377.82px;font-size:22.3px;line-height:25.62px;color:#0A2540;font-weight:700;">Filters</div><div class="a" style="left:1339px;top:412px;width:49px;height:2px;background:#4BA6F2"></div><svg style="left:1848px;top:378px" width="16" height="16" viewBox="0 0 16 16">
<path d="M1.5 1.5 L14.5 14.5 M14.5 1.5 L1.5 14.5" stroke="#0B63B3" stroke-width="2"/></svg><div class="t" style="left:1340px;top:453.09px;font-size:11.5px;line-height:13.21px;color:#3A4550;font-weight:700;">*One date range is required.</div><div class="a" style="left:1339px;top:494px;width:530px;height:48px;border:1px solid #3B4754;border-radius:4px;background:#fff"></div><div class="t" style="left:1355px;top:506.90px;font-size:18.9px;line-height:21.72px;color:#66727F;font-weight:400;">Date of Service</div><div class="t" style="left:1355px;top:551.14px;font-size:12px;line-height:13.79px;color:#56616C;font-weight:400;">MM/DD/YYYY - MM/DD/YYYY</div><svg style="left:1820px;top:498px" width="42" height="40" viewBox="0 0 42 40">
<rect x="10.35" y="10.45" width="21.4" height="21.5" rx="2.6" fill="none" stroke="#0B63B3" stroke-width="2.5"/>
<g fill="#0B63B3"><rect x="9.1" y="14.8" width="23.9" height="2.4"/>
<rect x="13" y="6" width="2.8" height="5"/><rect x="26.3" y="6" width="2.8" height="5"/>
<rect x="14.1" y="20.15" width="2.8" height="2.8"/><rect x="19.45" y="20.15" width="2.8" height="2.8"/><rect x="25.05" y="20.15" width="2.8" height="2.8"/>
<rect x="14.1" y="25.25" width="2.8" height="2.8"/><rect x="19.45" y="25.25" width="2.8" height="2.8"/><rect x="25.05" y="25.25" width="2.8" height="2.8"/></g></svg><div class="a" style="left:1339px;top:592px;width:530px;height:48px;border:1px solid #3B4754;border-radius:4px;background:#fff"></div><div class="t" style="left:1355px;top:604.90px;font-size:18.9px;line-height:21.72px;color:#66727F;font-weight:400;">Date Submitted</div><div class="t" style="left:1355px;top:649.14px;font-size:12px;line-height:13.79px;color:#56616C;font-weight:400;">MM/DD/YYYY - MM/DD/YYYY</div><svg style="left:1820px;top:596px" width="42" height="40" viewBox="0 0 42 40">
<rect x="10.35" y="10.45" width="21.4" height="21.5" rx="2.6" fill="none" stroke="#0B63B3" stroke-width="2.5"/>
<g fill="#0B63B3"><rect x="9.1" y="14.8" width="23.9" height="2.4"/>
<rect x="13" y="6" width="2.8" height="5"/><rect x="26.3" y="6" width="2.8" height="5"/>
<rect x="14.1" y="20.15" width="2.8" height="2.8"/><rect x="19.45" y="20.15" width="2.8" height="2.8"/><rect x="25.05" y="20.15" width="2.8" height="2.8"/>
<rect x="14.1" y="25.25" width="2.8" height="2.8"/><rect x="19.45" y="25.25" width="2.8" height="2.8"/><rect x="25.05" y="25.25" width="2.8" height="2.8"/></g></svg><div class="a" style="left:1355px;top:697px;width:498px;height:1px;background:#5D6873"></div><div class="a" style="left:1339px;top:730px;width:530px;height:48px;border:1px solid #C4CAD1;border-radius:4px;background:#fff"></div><div class="t" style="left:1355px;top:743.17px;font-size:18.6px;line-height:21.37px;color:#AFB7C0;font-weight:400;">Status</div><div class="t" style="left:1355px;top:787.14px;font-size:12px;line-height:13.79px;color:#56616C;font-weight:400;">Can select multiple options</div><svg style="left:1826px;top:738px" width="30" height="32" viewBox="0 0 30 32">
<path d="M10.975 14.6 V10.95 A4.075 4.075 0 0 1 19.125 10.95 V14.6" fill="none" stroke="#E0E2E5" stroke-width="1.75"/>
<rect x="7.4" y="14.2" width="15.3" height="11.6" fill="#E0E2E5"/>
<circle cx="14.95" cy="19" r="1.7" fill="#fff"/><path d="M14.1 19.5 H15.8 L15.5 22.7 H14.4 Z" fill="#fff"/></svg><div class="a" style="left:1339px;top:828px;width:530px;height:48px;border:1px solid #C4CAD1;border-radius:4px;background:#fff"></div><div class="t" style="left:1355px;top:841.17px;font-size:18.6px;line-height:21.37px;color:#AFB7C0;font-weight:400;">Service Type</div><div class="t" style="left:1355px;top:885.14px;font-size:12px;line-height:13.79px;color:#56616C;font-weight:400;">Select one option</div><svg style="left:1826px;top:836px" width="30" height="32" viewBox="0 0 30 32">
<path d="M10.975 14.6 V10.95 A4.075 4.075 0 0 1 19.125 10.95 V14.6" fill="none" stroke="#E0E2E5" stroke-width="1.75"/>
<rect x="7.4" y="14.2" width="15.3" height="11.6" fill="#E0E2E5"/>
<circle cx="14.95" cy="19" r="1.7" fill="#fff"/><path d="M14.1 19.5 H15.8 L15.5 22.7 H14.4 Z" fill="#fff"/></svg><div class="a" style="left:1339px;top:927px;width:530px;height:10px;overflow:hidden"><div class="a" style="left:0;top:0;width:530px;height:48px;border:1px solid #C4CAD1;border-radius:4px"></div></div><div class="a" style="left:1315px;top:948px;width:577px;height:1px;background:#BEC4CB"></div><div class="a" style="left:1885px;top:468px;width:7.5px;height:144px;background:#B8BDC2;border-radius:4px"></div><div class="a" style="left:1339px;top:972px;width:253px;height:48px;border:1.6px solid #0B63B3;border-radius:24px;background:#fff;box-shadow:0 3px 8px rgba(30,50,80,.08)"></div><div class="t" style="left:1165.5px;width:600px;text-align:center;top:987.25px;font-size:17.4px;line-height:19.99px;color:#0B63B3;font-weight:700;">Clear</div><div class="a" style="left:1616px;top:972px;width:253px;height:48px;border-radius:24px;background:#DFE1E4"></div><div class="t" style="left:1442.5px;width:600px;text-align:center;top:987.25px;font-size:17.4px;line-height:19.99px;color:#69727C;font-weight:700;">Apply</div><div class="a" style="left:36px;top:1468px;width:96px;height:48px;border:1.5px solid #003764;border-radius:5px;background:#fff"></div><div class="a" style="left:48px;top:1459px;width:65px;height:11px;background:#F9FAFB"></div><div class="t" style="left:52.5px;top:1459.78px;font-size:13.5px;line-height:15.51px;color:#0E2A47;font-weight:400;">Per Page</div><div class="t" style="left:52px;top:1482.26px;font-size:18.5px;line-height:21.26px;color:#0E2A47;font-weight:400;">10</div><svg style="left:102px;top:1487px" width="14" height="10" viewBox="0 0 14 10">
<path d="M1.7 1.9 L6.7 6.9 L11.7 1.9" fill="none" stroke="#0B63B3" stroke-width="1.75"/></svg><div class="a" style="left:1746px;top:1468px;width:84px;height:48px;border:1.5px solid #003764;border-radius:5px;background:#fff"></div><div class="a" style="left:1758px;top:1459px;width:40px;height:11px;background:#F9FAFB"></div><div class="t" style="left:1762.5px;top:1459.78px;font-size:13.5px;line-height:15.51px;color:#0E2A47;font-weight:400;">Page</div><div class="t" style="left:1762px;top:1482.26px;font-size:18.5px;line-height:21.26px;color:#0E2A47;font-weight:400;">1</div><svg style="left:1800px;top:1487px" width="14" height="10" viewBox="0 0 14 10">
<path d="M1.7 1.9 L6.7 6.9 L11.7 1.9" fill="none" stroke="#0B63B3" stroke-width="1.75"/></svg><div class="t" style="left:1846px;top:1483.26px;font-size:18.5px;line-height:21.26px;color:#0E2A47;font-weight:400;">of 10</div><svg style="left:640px;top:1480px" width="30" height="24" viewBox="0 0 30 24">
<path d="M12.4 4.2 L5.2 12 L12.4 19.8 M24 4.2 L16.8 12 L24 19.8" fill="none" stroke="#0B63B3" stroke-width="2.8"/></svg><svg style="left:708px;top:1480px" width="18" height="24" viewBox="0 0 18 24">
<path d="M13.2 3.8 L5.4 12 L13.2 20.2" fill="none" stroke="#0B63B3" stroke-width="2.8"/></svg><div class="a" style="left:758px;top:1468px;width:48px;height:48px;border-radius:50%;background:#0B63B3"></div><div class="t" style="left:482px;width:600px;text-align:center;top:1481.71px;font-size:18px;line-height:20.68px;color:#fff;font-weight:700;">1</div><div class="t" style="left:545.5px;width:600px;text-align:center;top:1481.26px;font-size:18.5px;line-height:21.26px;color:#0E2A47;font-weight:400;">2</div><div class="t" style="left:609.5px;width:600px;text-align:center;top:1481.26px;font-size:18.5px;line-height:21.26px;color:#0E2A47;font-weight:400;">3</div><div class="t" style="left:673.5px;width:600px;text-align:center;top:1481.26px;font-size:18.5px;line-height:21.26px;color:#0E2A47;font-weight:400;">4</div><div class="t" style="left:737.5px;width:600px;text-align:center;top:1481.26px;font-size:18.5px;line-height:21.26px;color:#0E2A47;font-weight:400;">5</div><div class="t" style="left:800.5px;width:600px;text-align:center;top:1481.26px;font-size:18.5px;line-height:21.26px;color:#0E2A47;font-weight:400;">6</div><div class="t" style="left:860px;width:600px;text-align:center;top:1482.26px;font-size:18.5px;line-height:21.26px;color:#0E2A47;font-weight:400;">...</div><svg style="left:1213px;top:1480px" width="18" height="24" viewBox="0 0 18 24">
<path d="M4.8 3.8 L12.6 12 L4.8 20.2" fill="none" stroke="#0B63B3" stroke-width="2.8"/></svg><svg style="left:1265px;top:1480px" width="30" height="24" viewBox="0 0 30 24">
<path d="M5.6 4.2 L12.8 12 L5.6 19.8 M17.2 4.2 L24.4 12 L17.2 19.8" fill="none" stroke="#0B63B3" stroke-width="2.8"/></svg><div class="a" style="left:4px;top:1609px;width:1920px;height:1px;background:#fff"></div><div class="a" style="left:4px;top:1610px;width:1920px;height:40px;background:#003764"></div><div class="t" style="left:663px;width:600px;text-align:center;top:1622.33px;font-size:14px;line-height:16.09px;color:#fff;font-weight:400;">@2024 Highmark Health Services. All rights reserved.</div></body></html>
